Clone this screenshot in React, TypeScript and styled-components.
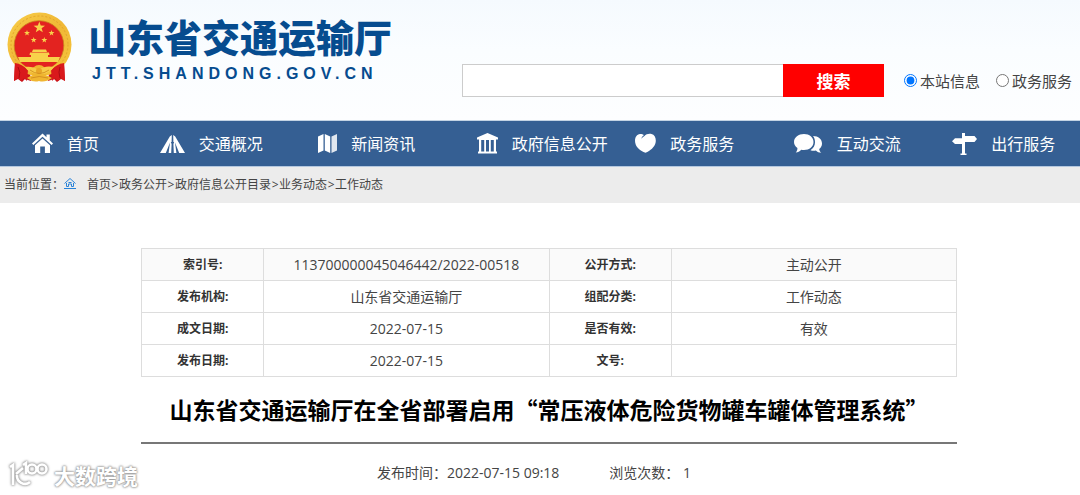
import React from "react";
import styled, { createGlobalStyle } from "styled-components";

const GlobalStyle = createGlobalStyle`
  *, *::before, *::after { box-sizing: border-box; }
  body {
    margin: 0;
    background: #fff;
    color: #444;
    font-family: "Open Sans", "Noto Sans CJK SC", sans-serif;
    font-size: 14px;
  }
  a { color: inherit; text-decoration: none; }
`;

const Page = styled.div`
  position: relative;
  min-height: 100vh;
  overflow: hidden;
`;

const Header = styled.header`
  display: flex;
  justify-content: space-between;
  align-items: flex-start;
  padding: 12px 8px 0 7px;
  height: 120px;
  background: linear-gradient(to bottom, #f5fafe 0, #fafdff 50px, #fdfeff 100%);
`;

const Brand = styled.a`
  display: flex;
  gap: 16px;
  color: #064c8f;
`;

const BrandText = styled.div`
  display: flex;
  flex-direction: column;
  gap: 4px;
`;

const BrandName = styled.h1`
  margin: 0;
  font-family: "Noto Sans CJK SC", sans-serif;
  font-size: 38px;
  line-height: 48px;
  font-weight: 900;
  white-space: nowrap;
`;

const BrandDomain = styled.span`
  padding-left: 4px;
  font-family: "Liberation Sans", sans-serif;
  font-size: 16px;
  line-height: 20px;
  font-weight: 700;
  letter-spacing: 5px;
`;

const SearchForm = styled.form`
  display: flex;
  align-items: center;
  margin-top: 52px;
`;

const SearchInput = styled.input`
  width: 321px;
  height: 33px;
  padding: 0 8px;
  border: 1px solid #ccc;
  border-right: 0;
  border-radius: 0;
  background: #fff;
  font: inherit;
  outline: none;
`;

const SearchButton = styled.button`
  width: 101px;
  height: 33px;
  padding: 0;
  border: 0;
  background: #f00;
  color: #fff;
  font-family: "Noto Sans CJK SC", sans-serif;
  font-size: 17px;
  font-weight: 700;
`;

const Scope = styled.label`
  display: flex;
  align-items: center;
  gap: 3px;
  margin-left: 20px;
  font-size: 15px;
  line-height: 20px;
  white-space: nowrap;

  & + & { margin-left: 16px; }
`;

const Radio = styled.input`
  width: 13px;
  height: 13px;
  margin: 0;
`;

const Nav = styled.nav`
  display: grid;
  grid-template-columns: 128fr repeat(5, 159fr) 128fr;
  align-items: center;
  height: 47px;
  padding: 0 0 0 32px;
  border-top: 1px solid #c3d3e4;
  border-bottom: 1px solid #b4c8df;
  background: #355f93;
`;

const NavLink = styled.a`
  display: flex;
  align-items: center;
  gap: 14px;
  color: #fff;
  font-size: 16px;
  line-height: 24px;
  white-space: nowrap;
`;

const NavIcon = styled.svg`
  display: block;
  flex: none;
  fill: #fff;
`;

const Breadcrumb = styled.div`
  display: flex;
  align-items: center;
  height: 36px;
  padding-left: 4px;
  background: #ececec;
  font-size: 12px;
  line-height: 20px;
  white-space: nowrap;
`;

const HomeLink = styled.a`
  display: block;
  margin: 0 11px 0 0;
`;

const Separator = styled.span`
  width: 8px;
  text-align: center;
`;

const Article = styled.main`
  padding: 45px 123px 8px 141px;
`;

const InfoTable = styled.table`
  width: 100%;
  table-layout: fixed;
  border-collapse: collapse;
  text-align: center;

  th, td {
    height: 32px;
    padding: 0;
    border: 1px solid #ddd;
    line-height: 20px;
  }
  th { width: 15%; font-size: 12px; font-weight: 700; color: #333; }
  td { width: 35%; font-size: 14px; }
  tr:first-child { background: #fafafa; }
`;

const Title = styled.h2`
  margin: 15px 0 0;
  padding-bottom: 16px;
  border-bottom: 2px solid #777;
  color: #000;
  font-family: "Noto Sans CJK SC", sans-serif;
  font-size: 23px;
  line-height: 34px;
  font-weight: 700;
  text-align: center;
  white-space: nowrap;
`;

const Meta = styled.div`
  display: flex;
  justify-content: center;
  gap: 50px;
  padding: 19px 30px 0 0;
  font-size: 14px;
  line-height: 20px;
`;

const Watermark = styled.div`
  position: absolute;
  left: 9px;
  bottom: 4px;
  display: flex;
  align-items: center;
  gap: 5px;
  color: #fff;
  font-family: "Noto Sans CJK SC", sans-serif;
  font-size: 21px;
  line-height: 32px;
  font-weight: 700;
  text-shadow: 0 0 2px #999, 0 0 2px #999, 0 0 3px #aaa;

  svg { filter: drop-shadow(0 0 1px #999) drop-shadow(0 0 1px #aaa); }
`;

const starPoints = (cx: number, cy: number, r: number) =>
  Array.from({ length: 10 }, (_, i) => {
    const radius = i % 2 ? r * 0.4 : r;
    const angle = (Math.PI / 5) * i - Math.PI / 2;
    return `${(cx + radius * Math.cos(angle)).toFixed(2)},${(cy + radius * Math.sin(angle)).toFixed(2)}`;
  }).join(" ");

const Emblem = () => (
  <svg width="65" height="71" viewBox="0 0 65 71" aria-hidden="true">
    <defs>
      <linearGradient id="gold" x1="0" y1="0" x2="1" y2="1">
        <stop offset="0" stopColor="#f8cf4a" />
        <stop offset="0.5" stopColor="#f0b836" />
        <stop offset="1" stopColor="#f6c63c" />
      </linearGradient>
    </defs>
    <path d="M8 50 L22 54 L24 69 L18 67 L15 70 L11 67 L7 69 Z" fill="#c8141a" />
    <path d="M57 50 L43 54 L41 69 L47 67 L50 70 L54 67 L58 69 Z" fill="#c8141a" />
    <circle cx="32.5" cy="32.5" r="32" fill="url(#gold)" />
    <circle cx="32.5" cy="32.5" r="28.5" fill="none" stroke="#e2a32c" strokeWidth="1" strokeDasharray="2 2" />
    <circle cx="32" cy="33.5" r="24.8" fill="#e32320" stroke="#c9821d" strokeWidth="0.8" />
    <g fill="#f8d24a">
      <polygon points={starPoints(32.3, 15.5, 6)} />
      <polygon points={starPoints(20, 21, 3.1)} />
      <polygon points={starPoints(44.5, 21, 3.1)} />
      <polygon points={starPoints(26.7, 28, 3.1)} />
      <polygon points={starPoints(37.3, 28, 3.1)} />
      <path d="M26 37.5 H39 L40 40 H25 Z M23 40.5 H42 L42.5 43 H22.5 Z M24 43 H41 V45 H53 L51 50 H13 L11 45 H24 Z" />
    </g>
    <path d="M14 50.5 H50 Q42 58 32 58 Q22 58 14 50.5 Z" fill="#e32320" />
    <path d="M8 51 Q15 52 21 58 L20 69 L17 66 L14 69 L11 66 L7 69 Z" fill="#d9191c" />
    <path d="M57 51 Q50 52 44 58 L45 69 L48 66 L51 69 L54 66 L58 69 Z" fill="#d9191c" />
    <path d="M11 55 Q14 60 12 66 M53 55 Q51 60 53 66" fill="none" stroke="#a90d13" strokeWidth="1" />
    <circle cx="32" cy="60.5" r="7.5" fill="#efb52f" />
    <path d="M18 55 Q26 54 31 58 Q38 53 47 55 Q42 63 32 62 Q22 62 18 55 Z" fill="#f7cc48" />
    <circle cx="32" cy="59" r="3" fill="#e8a527" />
    <path d="M20 66 Q26 61 32 65 Q38 61 45 66 Q38 71 32 69 Q26 71 20 66 Z" fill="#f0b631" />
    <path d="M23 58 Q32 65 42 58 M24 66 Q32 63 41 66" fill="none" stroke="#ce861d" strokeWidth="0.8" />
  </svg>
);

const navItems = [
  {
    label: "首页",
    width: 21,
    art: <path d="M10.5 0.5 L14.5 4.3 V1.5 H17.8 V7.4 L21 10.5 L19.6 12 L10.5 3.7 L1.4 12 L0 10.5 Z M10.5 5.5 L18 12.3 V20 H12.9 V13.5 H8.2 V20 H3 V12.3 Z" />,
  },
  {
    label: "交通概况",
    width: 25,
    art: (
      <>
        <path d="M11.8 2 L11.6 9 H10.8 L11.6 11 L11.2 20 H8.6 L10 9.5 L5.8 20 H0 L9.8 3.5 Z" />
        <path d="M13.2 2 L13.4 9 H14.2 L13.4 11 L13.8 20 H16.4 L15 9.5 L19.2 20 H25 L15.2 3.5 Z" />
      </>
    ),
  },
  {
    label: "新闻资讯",
    width: 19,
    art: (
      <>
        <path d="M0 3.5 L5.5 1 V17.5 L0 20 Z M6.8 1 L12.2 3.5 V20 L6.8 17.5 Z" />
        <path d="M13.5 3.5 L19 1 V17.5 L13.5 20 Z" fillOpacity="0.85" />
      </>
    ),
  },
  {
    label: "政府信息公开",
    width: 21,
    art: <path fillRule="evenodd" d="M10.5 0 L21 4.5 V6.5 H19 V18.5 H20 V20.5 H1 V18.5 H2 V6.5 H0 V4.5 Z M4.2 7 V18.5 H7.2 V7 Z M9 7 V18.5 H12 V7 Z M13.8 7 V18.5 H16.8 V7 Z" />,
  },
  {
    label: "政务服务",
    width: 21,
    art: <path d="M9.5 3 C11 1 14 0.5 16.5 1 C20 1.8 21.5 6 20.5 10 C19.5 14 15.5 17.8 10.5 19.7 C5 17.8 1.3 14.5 0.3 10 C-0.7 5.5 1.2 1.2 5 0.9 C6.5 0.8 8 1.2 9 2 C7.8 2.8 6.8 4 6.3 5.7 C7.2 4.5 8.2 3.7 9.5 3 Z" />,
  },
  {
    label: "互动交流",
    width: 29,
    art: (
      <>
        <path d="M10 1 C15.5 1 19.5 4.5 19.5 9 C19.5 13.5 15.5 17 10 17 C9 17 8 16.9 7.2 16.7 C5.5 18.5 4 19.3 1.8 19.5 C3 18 3.5 16.8 3.4 15 C1.2 13.4 0 11.4 0 9 C0 4.5 4.5 1 10 1 Z" />
        <path d="M19 3 C24.5 3 28 6.2 28 10.5 C28 12.8 27 14.7 25.2 16 C25.3 17.5 26 18.7 27.3 19.8 C25 19.7 23.3 18.9 21.9 17.5 C20 17.9 18.2 17.8 16.5 17.2 C19.5 15.3 21 12.5 21 9.3 C21 6.8 20.3 4.7 19 3 Z" />
      </>
    ),
  },
  {
    label: "出行服务",
    width: 25,
    art: <path d="M10 0 H13 V3 H22.5 L25 6 L22.5 9 H13 V20.5 H14.5 V22 H8.5 V20.5 H10 V11 H3 L0 8.2 L3 5.3 H10 Z" />,
  },
];

const trail = ["首页", "政务公开", "政府信息公开目录", "业务动态", "工作动态"];

const infoRows = [
  ["索引号:", "113700000045046442/2022-00518", "公开方式:", "主动公开"],
  ["发布机构:", "山东省交通运输厅", "组配分类:", "工作动态"],
  ["成文日期:", "2022-07-15", "是否有效:", "有效"],
  ["发布日期:", "2022-07-15", "文号:", ""],
];

export default function App() {
  return (
    <Page lang="zh-CN">
      <GlobalStyle />
      <Header>
        <Brand href="#">
          <Emblem />
          <BrandText>
            <BrandName>山东省交通运输厅</BrandName>
            <BrandDomain>JTT.SHANDONG.GOV.CN</BrandDomain>
          </BrandText>
        </Brand>
        <SearchForm onSubmit={(e) => e.preventDefault()}>
          <SearchInput type="text" aria-label="搜索" />
          <SearchButton type="submit">搜索</SearchButton>
          <Scope>
            <Radio type="radio" name="scope" defaultChecked />
            本站信息
          </Scope>
          <Scope>
            <Radio type="radio" name="scope" />
            政务服务
          </Scope>
        </SearchForm>
      </Header>

      <Nav>
        {navItems.map((item) => (
          <NavLink href="#" key={item.label}>
            <NavIcon width={item.width} height="22" viewBox={`0 0 ${item.width} 22`} aria-hidden="true">
              {item.art}
            </NavIcon>
            {item.label}
          </NavLink>
        ))}
      </Nav>

      <Breadcrumb>
        当前位置：
        <HomeLink href="#" aria-label="首页">
          <svg width="12" height="12" viewBox="0 0 12 12" fill="none" stroke="#2a83d8" strokeWidth="1" aria-hidden="true">
            <path d="M0.5 6.5 L6 1.5 L11.5 6.5 M2.5 6 V9.5 H4.5 V7 H7.5 V9.5 H9.5 V6 M4.5 5.5 H7.5 M0 11.5 H12" />
          </svg>
        </HomeLink>
        {trail.map((name, i) => (
          <React.Fragment key={name}>
            {i > 0 && <Separator>&gt;</Separator>}
            <a href="#">{name}</a>
          </React.Fragment>
        ))}
      </Breadcrumb>

      <Article>
        <InfoTable>
          <tbody>
            {infoRows.map(([k1, v1, k2, v2]) => (
              <tr key={k1}>
                <th scope="row">{k1}</th>
                <td>{v1}</td>
                <th scope="row">{k2}</th>
                <td>{v2}</td>
              </tr>
            ))}
          </tbody>
        </InfoTable>
        <Title>山东省交通运输厅在全省部署启用“常压液体危险货物罐车罐体管理系统”</Title>
        <Meta>
          <span>发布时间：2022-07-15 09:18</span>
          <span>浏览次数： 1</span>
        </Meta>
      </Article>

      <Watermark>
        <svg width="40" height="28" viewBox="0 0 40 28" fill="none" stroke="#fff" strokeWidth="2.6" aria-hidden="true">
          <path d="M1 6 L4 4 V24 M14 7 L7 13 M8 14 A8 8 0 0 0 21 21 M14 4 L17 2 V13" />
          <circle cx="23" cy="8" r="4.5" />
          <circle cx="33" cy="8" r="4.5" />
        </svg>
        大数跨境
      </Watermark>
    </Page>
  );
}
